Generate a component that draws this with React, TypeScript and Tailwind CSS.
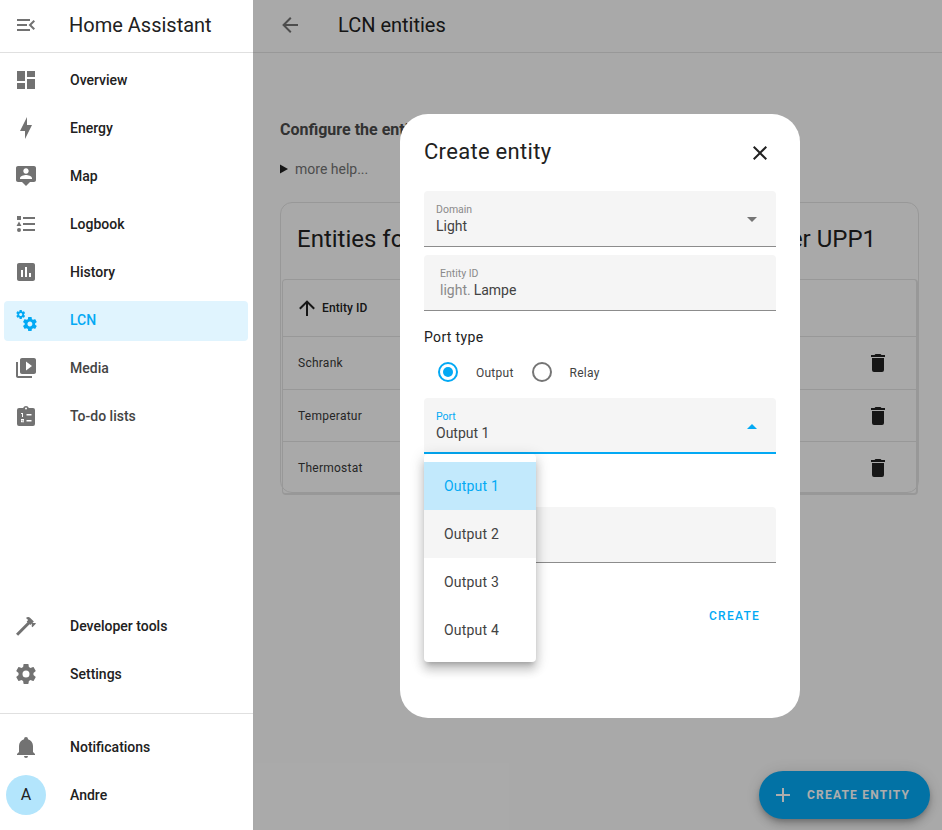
const ICONS = {
  menuOpen: "M21,15.61L19.59,17L14.58,12L19.59,7L21,8.39L17.44,12L21,15.61M3,6H16V8H3V6M3,13V11H13V13H3M3,18V16H16V18H3Z",
  dashboard: "M13,3V9H21V3M13,21H21V11H13M3,21H11V15H3M3,13H11V3H3V13Z",
  bolt: "M11 15H6L13 1V9H18L11 23V15Z",
  map: "M20 2H4C2.9 2 2 2.9 2 4V16C2 17.1 2.9 18 4 18H8L12 22L16 18H20C21.1 18 22 17.1 22 16V4C22 2.9 21.1 2 20 2M12 4.3C13.5 4.3 14.7 5.5 14.7 7S13.5 9.7 12 9.7 9.3 8.5 9.3 7 10.5 4.3 12 4.3M18 15H6V14.1C6 12.1 10 11 12 11S18 12.1 18 14.1V15Z",
  list: "M5,9.5L7.5,14H2.5L5,9.5M3,4H7V8H3V4M5,20A2,2 0 0,0 7,18A2,2 0 0,0 5,16A2,2 0 0,0 3,18A2,2 0 0,0 5,20M9,5V7H21V5H9M9,19H21V17H9V19M9,13H21V11H9V13Z",
  chart: "M9 17H7V10H9V17M13 17H11V7H13V17M17 17H15V13H17V17M19 3H5C3.89 3 3 3.89 3 5V19C3 20.1 3.9 21 5 21H19C20.1 21 21 20.1 21 19V5C21 3.89 20.1 3 19 3Z",
  cogs: "M15.9,18.45C17.25,18.45 18.35,17.35 18.35,16C18.35,14.65 17.25,13.55 15.9,13.55C14.54,13.55 13.45,14.65 13.45,16C13.45,17.35 14.54,18.45 15.9,18.45M21.1,16.68L22.58,17.84C22.71,17.95 22.75,18.13 22.66,18.29L21.26,20.71C21.17,20.86 21,20.92 20.83,20.86L19.09,20.16C18.73,20.44 18.33,20.67 17.91,20.85L17.64,22.7C17.62,22.87 17.47,23 17.3,23H14.5C14.32,23 14.18,22.87 14.15,22.7L13.89,20.85C13.46,20.67 13.07,20.44 12.71,20.16L10.96,20.86C10.81,20.92 10.62,20.86 10.54,20.71L9.14,18.29C9.05,18.13 9.09,17.95 9.22,17.84L10.7,16.68L10.65,16L10.7,15.31L9.22,14.16C9.09,14.05 9.05,13.86 9.14,13.71L10.54,11.29C10.62,11.13 10.81,11.07 10.96,11.13L12.71,11.84C13.07,11.56 13.46,11.32 13.89,11.15L14.15,9.29C14.18,9.13 14.32,9 14.5,9H17.3C17.47,9 17.62,9.13 17.64,9.29L17.91,11.15C18.33,11.32 18.73,11.56 19.09,11.84L20.83,11.13C21,11.07 21.17,11.13 21.26,11.29L22.66,13.71C22.75,13.86 22.71,14.05 22.58,14.16L21.1,15.31L21.15,16L21.1,16.68M6.69,8.07C7.56,8.07 8.26,7.37 8.26,6.5C8.26,5.63 7.56,4.92 6.69,4.92A1.58,1.58 0 0,0 5.11,6.5C5.11,7.37 5.82,8.07 6.69,8.07M10.03,6.94L11,7.68C11.07,7.75 11.09,7.87 11.03,7.97L10.13,9.53C10.08,9.63 9.96,9.67 9.86,9.63L8.74,9.18L8,9.62L7.81,10.81C7.79,10.92 7.7,11 7.59,11H5.79C5.67,11 5.58,10.92 5.56,10.81L5.4,9.62L4.64,9.18L3.5,9.63C3.41,9.67 3.3,9.63 3.24,9.53L2.34,7.97C2.28,7.87 2.31,7.75 2.39,7.68L3.34,6.94L3.31,6.5L3.34,6.06L2.39,5.32C2.31,5.25 2.28,5.13 2.34,5.03L3.24,3.47C3.3,3.37 3.41,3.33 3.5,3.37L4.63,3.82L5.4,3.38L5.56,2.19C5.58,2.08 5.67,2 5.79,2H7.59C7.7,2 7.79,2.08 7.81,2.19L8,3.38L8.74,3.82L9.86,3.37C9.96,3.33 10.08,3.37 10.13,3.47L11.03,5.03C11.09,5.13 11.07,5.25 11,5.32L10.03,6.06L10.06,6.5L10.03,6.94Z",
  media: "M4 6H2V20C2 21.1 2.9 22 4 22H18V20H4V6M20 2H8C6.9 2 6 2.9 6 4V16C6 17.1 6.9 18 8 18H20C21.1 18 22 17.1 22 16V4C22 2.9 21.1 2 20 2M12 14.5V5.5L18 10L12 14.5Z",
  todo: "M17,4H14.82C14.4,2.84 13.3,2 12,2C10.7,2 9.6,2.84 9.18,4H5A2,2 0 0,0 3,6V20A2,2 0 0,0 5,22H19A2,2 0 0,0 21,20V6A2,2 0 0,0 19,4H17ZM12,3.5A1,1 0 0,1 13,4.5A1,1 0 0,1 12,5.5A1,1 0 0,1 11,4.5A1,1 0 0,1 12,3.5ZM12.5,10H17.5V11.5H12.5V10ZM12.5,16H17.5V17.5H12.5V16ZM7,9H9V13H8V10H7V9ZM7,15H10V16.8H8V17.2H10V18.2H7V16.2H9V16H7V15Z",
  hammer: "M2 19.63L13.43 8.2L12.72 7.5L14.14 6.07L12 3.89C13.2 2.7 15.09 2.7 16.27 3.89L19.87 7.5L18.45 8.91H21.29L22 9.62L18.45 13.21L17.74 12.5V9.62L16.27 11.04L15.56 10.33L4.13 21.76L2 19.63Z",
  cog: "M12,15.5A3.5,3.5 0 0,1 8.5,12A3.5,3.5 0 0,1 12,8.5A3.5,3.5 0 0,1 15.5,12A3.5,3.5 0 0,1 12,15.5M19.43,12.97C19.47,12.65 19.5,12.33 19.5,12C19.5,11.67 19.47,11.34 19.43,11L21.54,9.37C21.73,9.22 21.78,8.95 21.66,8.73L19.66,5.27C19.54,5.05 19.27,4.96 19.05,5.05L16.56,6.05C16.04,5.66 15.5,5.32 14.87,5.07L14.5,2.42C14.46,2.18 14.25,2 14,2H10C9.75,2 9.54,2.18 9.5,2.42L9.13,5.07C8.5,5.32 7.96,5.66 7.44,6.05L4.95,5.05C4.73,4.96 4.46,5.05 4.34,5.27L2.34,8.73C2.21,8.95 2.27,9.22 2.46,9.37L4.57,11C4.53,11.34 4.5,11.67 4.5,12C4.5,12.33 4.53,12.65 4.57,12.97L2.46,14.63C2.27,14.78 2.21,15.05 2.34,15.27L4.34,18.73C4.46,18.95 4.73,19.03 4.95,18.95L7.44,17.94C7.96,18.34 8.5,18.68 9.13,18.93L9.5,21.58C9.54,21.82 9.75,22 10,22H14C14.25,22 14.46,21.82 14.5,21.58L14.87,18.93C15.5,18.67 16.04,18.34 16.56,17.94L19.05,18.95C19.27,19.03 19.54,18.95 19.66,18.73L21.66,15.27C21.78,15.05 21.73,14.78 21.54,14.63L19.43,12.97Z",
  bell: "M21,19V20H3V19L5,17V11C5,7.9 7.03,5.17 10,4.29C10,4.19 10,4.1 10,4A2,2 0 0,1 12,2A2,2 0 0,1 14,4C14,4.1 14,4.19 14,4.29C16.97,5.17 19,7.9 19,11V17L21,19M14,21A2,2 0 0,1 12,23A2,2 0 0,1 10,21",
  back: "M20,11V13H8L13.5,18.5L12.08,19.92L4.16,12L12.08,4.08L13.5,5.5L8,11H20Z",
  up: "M13,20H11V8L5.5,13.5L4.08,12.08L12,4.16L19.92,12.08L18.5,13.5L13,8V20Z",
  trash: "M19,4H15.5L14.5,3H9.5L8.5,4H5V6H19M6,19A2,2 0 0,0 8,21H16A2,2 0 0,0 18,19V7H6V19Z",
  close: "M19,6.41L17.59,5L12,10.59L6.41,5L5,6.41L10.59,12L5,17.59L6.41,19L12,13.41L17.59,19L19,17.59L13.41,12L19,6.41Z",
  plus: "M19,13H13V19H11V13H5V11H11V5H13V11H19V13Z",
};

const Icon = ({ d, className }: { d: string; className: string }) => (
  <svg viewBox="0 0 24 24" className={`w-6 h-6 shrink-0 ${className}`} fill="currentColor">
    <path d={d} fillRule="evenodd" />
  </svg>
);

const NavItem = ({
  icon,
  label,
  active,
  muted,
}: {
  icon: string;
  label: string;
  active?: boolean;
  muted?: boolean;
}) => (
  <div className={`h-12 pl-1 pr-[5px] ${active ? "pt-[5px] pb-[3px]" : "py-1"}`}>
    <div className={`h-10 flex items-center rounded pl-[10px] ${active ? "bg-[#e0f4fe] pb-[2px]" : ""}`}>
      <Icon d={icon} className={active ? "text-[#03a9f4]" : "text-[#727272]"} />
      <span
        className={`ml-[32px] text-[14px] font-medium ${
          active ? "text-[#03a9f4]" : muted ? "text-[#444444]" : "text-[#212121]"
        }`}
      >
        {label}
      </span>
    </div>
  </div>
);

const Sidebar = () => (
  <aside className="w-[253px] shrink-0 h-full flex flex-col bg-white">
    <div className="h-[53px] shrink-0 border-b border-[#e0e0e0] flex items-center pl-[14px] pb-[2px]">
      <Icon d={ICONS.menuOpen} className="text-[#727272]" />
      <span className="ml-[31px] text-[20px] text-[#212121]">Home Assistant</span>
    </div>
    <nav className="pt-[3px]">
      <NavItem icon={ICONS.dashboard} label="Overview" />
      <NavItem icon={ICONS.bolt} label="Energy" />
      <NavItem icon={ICONS.map} label="Map" />
      <NavItem icon={ICONS.list} label="Logbook" />
      <NavItem icon={ICONS.chart} label="History" />
      <NavItem icon={ICONS.cogs} label="LCN" active />
      <NavItem icon={ICONS.media} label="Media" muted />
      <NavItem icon={ICONS.todo} label="To-do lists" muted />
    </nav>
    <div className="flex-1" />
    <NavItem icon={ICONS.hammer} label="Developer tools" />
    <NavItem icon={ICONS.cog} label="Settings" />
    <div className="mt-[15px] border-t border-[#e0e0e0] pt-[9px] pb-[11px]">
      <NavItem icon={ICONS.bell} label="Notifications" />
      <div className="h-12 flex items-center pl-[6px]">
        <div className="w-10 h-10 rounded-full bg-[#b3e5fc] flex items-center justify-center text-[16px] text-[#212121]">
          A
        </div>
        <span className="ml-[24px] text-[14px] font-medium text-[#212121]">Andre</span>
      </div>
    </div>
  </aside>
);

const ENTITY_ROWS = [
  { name: "Schrank", rowClass: "h-[53px]" },
  { name: "Temperatur", rowClass: "h-[52px]" },
  { name: "Thermostat", rowClass: "h-[51px]" },
];

const EntitiesPage = () => (
  <div className="h-full bg-[#fafafa]">
    <header className="h-[53px] border-b border-[#e0e0e0] flex items-center pl-[25px] pb-[2px]">
      <Icon d={ICONS.back} className="text-[#727272]" />
      <span className="ml-[36px] text-[20px] text-[#212121]">LCN entities</span>
    </header>
    <div className="pl-[27px] pr-[23px]">
      <p className="mt-[67px] text-[16px] leading-[19px] font-bold text-[#4a4a4a] whitespace-nowrap">
        Configure the entities of this module
      </p>
      <div className="mt-[20px] flex items-center text-[14px] leading-[20px] text-[#727272]">
        <svg viewBox="0 0 8 10" className="w-2 h-[10px] mr-[7px] text-[#212121]" fill="currentColor">
          <polygon points="0,0.5 8,5 0,9.5" />
        </svg>
        more help...
      </div>
      <section className="mt-[23px] h-[291px] rounded-xl border border-[#e0e0e0] bg-[#fafafa] flex flex-col">
        <h2 className="h-[76px] shrink-0 pl-4 pt-5 text-[24px] leading-[32px] text-[#212121] whitespace-nowrap">
          Entities for LCN module 1 segment 0 - Controller UPP1
        </h2>
        <div className="flex-1 rounded border border-[#e0e0e0] border-b-2 border-r-2 ml-px">
          <div className="h-[57px] border-b border-[#e0e0e0] flex items-center pl-3">
            <Icon d={ICONS.up} className="text-[#212121]" />
            <span className="ml-[3px] text-[12px] font-medium tracking-[0.1px] text-[#212121]">Entity ID</span>
          </div>
          {ENTITY_ROWS.map((row) => (
            <div
              key={row.name}
              className={`${row.rowClass} border-b last:border-b-0 border-[#e0e0e0] flex items-center justify-between pl-[15px] pr-[26px]`}
            >
              <span className="text-[12px] tracking-[0.25px] text-[#383838]">{row.name}</span>
              <Icon d={ICONS.trash} className="text-[#212121]" />
            </div>
          ))}
        </div>
      </section>
    </div>
    <button className="absolute right-3 bottom-[11px] h-12 w-[171px] rounded-3xl bg-[#03a9f4] flex items-center pl-3 text-white shadow-[0_3px_5px_-1px_rgba(0,0,0,.2),0_6px_10px_rgba(0,0,0,.14),0_1px_18px_rgba(0,0,0,.12)]">
      <Icon d={ICONS.plus} className="" />
      <span className="ml-[12px] text-[12px] font-bold tracking-[1.2px]">CREATE ENTITY</span>
    </button>
  </div>
);

const Field = ({
  label,
  focused,
  children,
  arrow,
  inset,
}: {
  label: string;
  focused?: boolean;
  children: React.ReactNode;
  arrow?: "up" | "down";
  inset?: boolean;
}) => (
  <div
    className={`relative h-14 rounded-t bg-[#f5f5f5] border-b ${
      focused ? "border-b-2 border-[#03a9f4]" : "border-[#8c8c8c]"
    } ${inset ? "pl-4" : "pl-3"}`}
  >
    <div className={`pt-[13px] text-[10.5px] leading-[12px] ${focused ? "text-[#03a9f4]" : "text-[#8a8a8a]"}`}>
      {label}
    </div>
    <div className="text-[14px] leading-[20px] text-[#424242]">{children}</div>
    {arrow && (
      <svg viewBox="0 0 10 5" className="absolute right-[19px] top-[26px] w-[10px] h-[5px]">
        <polygon
          points={arrow === "down" ? "0,0 10,0 5,5" : "0,5 10,5 5,0"}
          fill={focused ? "#03a9f4" : "#757575"}
        />
      </svg>
    )}
  </div>
);

const Radio = ({ label, checked }: { label: string; checked?: boolean }) => (
  <div className="flex items-center">
    <div className="w-10 h-10 flex items-center justify-center">
      <div
        className={`w-5 h-5 rounded-full border-2 flex items-center justify-center ${
          checked ? "border-[#03a9f4]" : "border-[#757575]"
        }`}
      >
        {checked && <div className="w-[10px] h-[10px] rounded-full bg-[#03a9f4]" />}
      </div>
    </div>
    <span className="ml-2 pt-[2px] text-[12px] tracking-[0.25px] text-[#424242]">{label}</span>
  </div>
);

const PORT_OPTIONS = ["Output 1", "Output 2", "Output 3", "Output 4"];

const PortMenu = () => (
  <div className="absolute left-0 top-full z-10 w-[112px] py-2 rounded bg-white shadow-[0_5px_5px_-3px_rgba(0,0,0,.2),0_8px_10px_1px_rgba(0,0,0,.14),0_3px_14px_2px_rgba(0,0,0,.12)]">
    {PORT_OPTIONS.map((option, i) => (
      <div
        key={option}
        className={`h-12 pl-5 flex items-center text-[14px] tracking-[0.2px] ${
          i === 0 ? "bg-[#c2e9fc] text-[#03a9f4]" : i === 1 ? "bg-[#f5f5f5] text-[#424242]" : "text-[#424242]"
        }`}
      >
        {option}
      </div>
    ))}
  </div>
);

const CreateDialog = () => (
  <div className="absolute inset-0 flex items-center justify-center pl-[5px] pt-[2px]">
    <div className="w-[400px] h-[604px] rounded-[28px] bg-white px-6">
      <div className="h-[77px] flex items-center justify-between">
        <span className="-mt-[2px] text-[22px] tracking-[0.3px] text-[#212121]">Create entity</span>
        <Icon d={ICONS.close} className="text-[#212121] mr-1" />
      </div>
      <Field label="Domain" arrow="down">Light</Field>
      <div className="mt-2">
        <Field label="Entity ID" inset>
          <span className="text-[#8a8a8a]">light.</span>
          <span className="ml-[3px]">Lampe</span>
        </Field>
      </div>
      <div className="mt-[18px] text-[14px] leading-[16px] tracking-[0.35px] text-[#212121]">Port type</div>
      <div className="mt-[7px] h-10 flex items-center gap-[8px] pl-1">
        <Radio label="Output" checked />
        <Radio label="Relay" />
      </div>
      <div className="relative mt-[6px]">
        <Field label="Port" arrow="up" focused>Output 1</Field>
        <PortMenu />
      </div>
      <div className="mt-[53px] h-14 rounded-t bg-[#f5f5f5] border-b border-[#8c8c8c]" />
      <div className="mt-[43px] flex justify-end pr-4">
        <span className="text-[12px] leading-[20px] font-medium tracking-[1.25px] text-[#03a9f4]">CREATE</span>
      </div>
    </div>
  </div>
);

export default function App() {
  return (
    <div className="w-[942px] h-[830px] flex overflow-hidden font-['Roboto',sans-serif]">
      <Sidebar />
      <main className="relative flex-1 h-full overflow-hidden">
        <EntitiesPage />
        <div className="absolute inset-0 bg-black/32" />
        <CreateDialog />
      </main>
    </div>
  );
}
